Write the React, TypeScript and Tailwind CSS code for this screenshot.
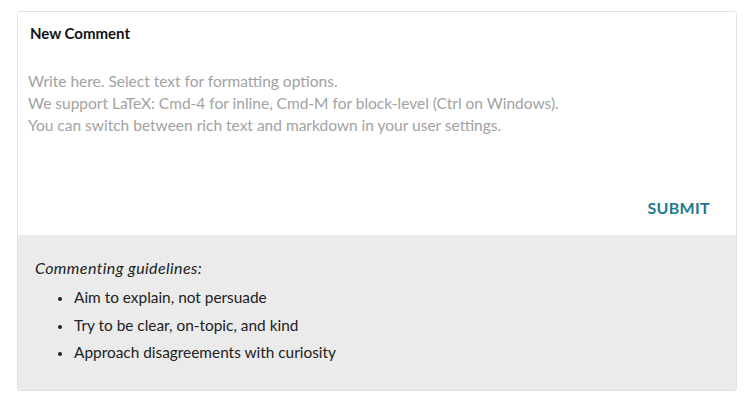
export default function App() {
  return (
    <div className="min-h-screen bg-white pt-[11px] pl-[17px] pr-[17px]" style={{ fontFamily: 'Lato, "Open Sans", sans-serif' }}>
      <div className="w-[720px] rounded-[3px] border border-[#e0e0e6] overflow-hidden">
        {/* editor */}
        <div className="bg-white pl-[10px] pr-3 pt-[11px] pb-[17px]">
          <h3 className="pl-[2px] text-[15px] font-bold text-[#111] leading-[20px]">New Comment</h3>
          <div className="mt-[27px] pr-2 text-[15.5px] leading-[22px] text-[#a2a2a2] min-h-[128px]">
            <p>Write here. Select text for formatting options.</p>
            <p>We support LaTeX: Cmd-4 for inline, Cmd-M for block-level (Ctrl on Windows).</p>
            <p>You can switch between rich text and markdown in your user settings.</p>
          </div>
          <div className="flex justify-end pr-[14px]">
            <button className="text-[16px] font-bold tracking-[0.3px] text-[#1f7a89] leading-[20px]">SUBMIT</button>
          </div>
        </div>
        {/* guidelines */}
        <div className="bg-[#ebebeb] px-[17px] pt-[22px] pb-[23px] text-[15.4px] text-[#222]">
          <p className="italic text-[16px] tracking-[0.4px] leading-[22px]">Commenting guidelines:</p>
          <ul className="mt-[5px] list-disc pl-[38px] marker:text-[12px]">
            <li className="leading-[27.5px] pl-px">Aim to explain, not persuade</li>
            <li className="leading-[27.5px] pl-px">Try to be clear, on-topic, and kind</li>
            <li className="leading-[27.5px] pl-px">Approach disagreements with curiosity</li>
          </ul>
        </div>
      </div>
    </div>
  )
}
